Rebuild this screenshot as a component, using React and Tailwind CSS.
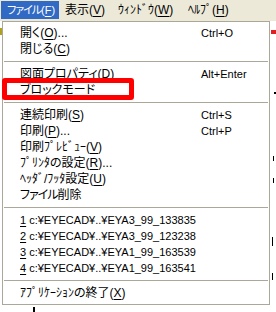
import React from 'react';

const U = ({ children }) => (
  <span className="underline decoration-1 underline-offset-[2px]">{children}</span>
);

const groups = [
  [
    { label: <>開く(<U>O</U>)...</>, keys: 'Ctrl+O' },
    { label: <>閉じる(<U>C</U>)</> },
  ],
  [
    { label: <>図面プロパティ(<U>D</U>)</>, keys: 'Alt+Enter' },
    { label: 'ブロックモード', boxed: true },
  ],
  [
    { label: <>連続印刷(<U>S</U>)</>, keys: 'Ctrl+S' },
    { label: <>印刷(<U>P</U>)...</>, keys: 'Ctrl+P' },
    { label: <>印刷ﾌﾟﾚﾋﾞｭｰ(<U>V</U>)</> },
    { label: <>ﾌﾟﾘﾝﾀの設定(<U>R</U>)...</> },
    { label: <>ﾍｯﾀﾞ/ﾌｯﾀ設定(<U>U</U>)</> },
    { label: <><span className="tracking-[-1px]">ファイル</span>削除</> },
  ],
  [
    { num: '1', path: 'c:¥EYECAD¥..¥EYA3_99_133835' },
    { num: '2', path: 'c:¥EYECAD¥..¥EYA3_99_123238' },
    { num: '3', path: 'c:¥EYECAD¥..¥EYA1_99_163539' },
    { num: '4', path: 'c:¥EYECAD¥..¥EYA1_99_163541' },
  ],
  [{ label: <>ｱﾌﾟﾘｹｰｼｮﾝの終了(<U>X</U>)</> }],
];

function Row({ item }) {
  return (
    <div className="relative flex h-[16px] items-center whitespace-nowrap pl-[17px]">
      {item.num ? (
        <span className="font-['Liberation_Sans',sans-serif] text-[11px] leading-none">
          <U>{item.num}</U> {item.path}
        </span>
      ) : (
        <span className="leading-none">{item.label}</span>
      )}
      {item.keys && (
        <span className="absolute left-[198px] font-['Liberation_Sans',sans-serif] text-[11px] leading-none">
          {item.keys}
        </span>
      )}
      {item.boxed && (
        <span className="absolute left-[-1px] top-[-4px] h-[22px] w-[132px] rounded-[3px] border-[5px] border-[#ff0000]" />
      )}
    </div>
  );
}

export default function App() {
  return (
    <div className="relative h-[312px] w-[276px] overflow-hidden bg-white text-black font-['Liberation_Sans','Noto_Sans_CJK_JP',sans-serif] text-[12px] [font-feature-settings:'palt']">
      {/* menu bar */}
      <div className="flex h-[21px] whitespace-nowrap bg-[#ece9d8] pt-[1px]">
        <div className="ml-[1px] flex h-[18px] w-[58px] shrink-0 items-center bg-[#316ac5] pl-[6px] text-[11px] text-white">
          <span className="tracking-[-1px]">ファイル</span>
          <span>(<U>F</U>)</span>
        </div>
        <div className="flex h-[18px] w-[52px] shrink-0 items-center pl-[6px]">
          表示(<U>V</U>)
        </div>
        <div className="flex h-[18px] w-[70px] shrink-0 items-center pl-[7px]">
          ｳｨﾝﾄﾞｳ(<U>W</U>)
        </div>
        <div className="flex h-[18px] shrink-0 items-center pl-[7px]">
          ﾍﾙﾌﾟ(<U>H</U>)
        </div>
      </div>

      {/* dropdown */}
      <div className="ml-[2px] w-[268px] border border-[#aca899] bg-white pt-[3px] pb-[3px]">
        {groups.map((g, gi) => (
          <div key={gi}>
            {gi > 0 && (
              <div className="flex h-[9px] items-center px-[1px]">
                <div className="h-px w-full bg-[#aca899]" />
              </div>
            )}
            {g.map((it, i) => (
              <Row key={i} item={it} />
            ))}
          </div>
        ))}
      </div>

      {/* bits of the drawing behind the menu */}
      <span className="absolute left-[271px] top-[30px] h-[4px] w-[5px] bg-[#e02020]" />
      <span className="absolute left-[274px] top-[92px] h-[2px] w-[2px] bg-black" />
      <span className="absolute left-[273px] top-[156px] h-[5px] w-[1px] bg-black" />
      <span className="absolute left-[273px] top-[178px] h-[5px] w-[1px] bg-black" />
      <span className="absolute left-[272px] top-[237px] h-[9px] w-[1px] bg-black" />
      <span className="absolute left-[272px] top-[273px] h-[7px] w-[1px] bg-black" />
      <span className="absolute left-[33px] top-[307px] h-[5px] w-[2px] bg-black" />
      <span className="absolute left-[0px] top-[28px] h-[7px] w-[2px] bg-[#b0a020]" />
    </div>
  );
}
